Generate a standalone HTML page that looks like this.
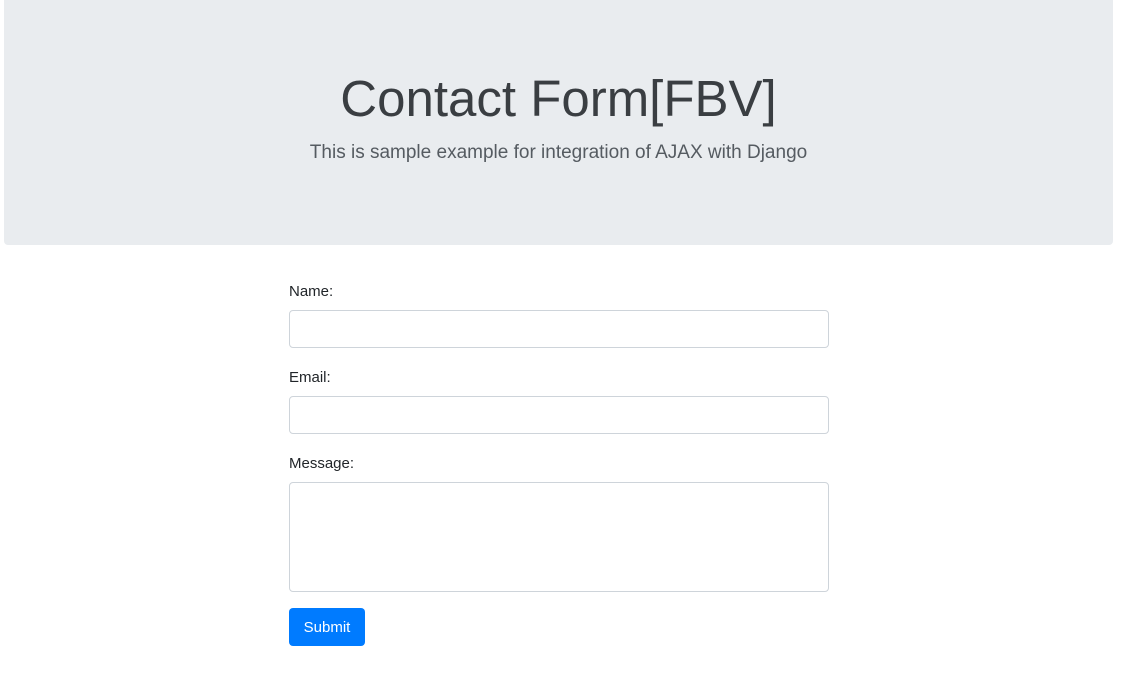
<!DOCTYPE html>
<html><head><style>
body{margin:0;background:#fff;font-family:"Liberation Sans",sans-serif;color:#212529;}
.j{position:absolute;left:4px;top:0;width:1109px;height:245px;background:#e9ecef;border-radius:0 0 4px 4px;text-align:center;}
h1{margin:0;position:absolute;top:64px;width:100%;font-size:51px;font-weight:300;color:#3a3e42;line-height:70px;}
.lead{position:absolute;top:140px;width:100%;font-size:19px;color:#555b61;line-height:26px;}
label{position:absolute;left:289px;font-size:15px;}
.in{position:absolute;left:289px;width:538px;border:1px solid #ced4da;border-radius:4px;background:#fff;}
.btn{position:absolute;left:289px;top:608px;width:76px;height:38px;background:#007bff;border-radius:4px;color:#fff;font-size:15px;line-height:40px;text-align:center;}
</style></head><body>
<div class="j"><h1>Contact Form[FBV]</h1><div class="lead">This is sample example for integration of AJAX with Django</div></div>
<label style="top:283px">Name:</label>
<div class="in" style="top:310px;height:36px"></div>
<label style="top:369px">Email:</label>
<div class="in" style="top:396px;height:36px"></div>
<label style="top:455px">Message:</label>
<div class="in" style="top:482px;height:108px"></div>
<div class="btn">Submit</div>
</body></html>
